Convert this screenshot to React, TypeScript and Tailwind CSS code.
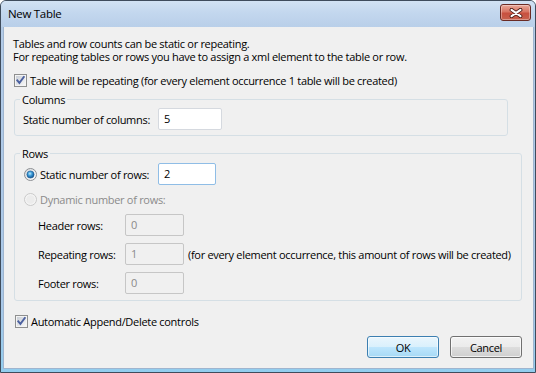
import React from "react";

function CheckBox() {
  return (
    <svg width="13" height="13" viewBox="0 0 13 13" className="shrink-0 block">
      <defs>
        <linearGradient id="cbIn" x1="0" y1="0" x2="1" y2="1">
          <stop offset="0" stopColor="#c9ced6" />
          <stop offset="1" stopColor="#f7f7f7" />
        </linearGradient>
      </defs>
      <rect x="0.5" y="0.5" width="12" height="12" fill="#f4f4f4" stroke="#8e8f8f" />
      <rect x="2" y="2" width="9" height="9" fill="url(#cbIn)" />
      <path d="M3.3 6.4 L5.4 8.9 L9.8 3" fill="none" stroke="#4c61a0" strokeWidth="1.9" strokeLinecap="square" />
    </svg>
  );
}

function RadioOn() {
  return (
    <svg width="13" height="13" viewBox="0 0 13 13" className="shrink-0 block">
      <defs>
        <linearGradient id="rbg" x1="0" y1="0" x2="1" y2="1">
          <stop offset="0" stopColor="#d6d8db" />
          <stop offset="1" stopColor="#ffffff" />
        </linearGradient>
        <radialGradient id="rdot" cx="0.42" cy="0.38" r="0.65">
          <stop offset="0" stopColor="#c2ecfd" />
          <stop offset="0.45" stopColor="#3a9ad8" />
          <stop offset="1" stopColor="#0d4a86" />
        </radialGradient>
      </defs>
      <circle cx="6.5" cy="6.5" r="6" fill="url(#rbg)" stroke="#8c8f93" />
      <circle cx="6.5" cy="6.5" r="3.6" fill="url(#rdot)" stroke="#1b5b93" strokeWidth="0.6" />
    </svg>
  );
}

function RadioOff() {
  return (
    <svg width="13" height="13" viewBox="0 0 13 13" className="shrink-0 block">
      <circle cx="6.5" cy="6.5" r="6" fill="#f4f4f4" stroke="#c9c9c9" />
      <circle cx="6.5" cy="6.5" r="4.3" fill="#ececec" />
    </svg>
  );
}

function Field({ value, w, variant }: { value: string; w: string; variant: "normal" | "focus" | "disabled" }) {
  const cls =
    variant === "normal"
      ? "bg-white border-[#d5d9df] text-black"
      : variant === "focus"
      ? "bg-white border-[#8fbde6] text-black"
      : "bg-[#f0f0f0] border-[#c6c6c6] text-[#8a8a8a]";
  return (
    <div className={`${w} h-[22px] shrink-0 border rounded-[2px] pl-[5px] pb-[2px] flex items-center leading-[15px] ${cls}`}>
      {value}
    </div>
  );
}

export default function App() {
  return (
    <div className="w-[536px] h-[373px] font-['Open_Sans','Noto_Sans',sans-serif] text-[11px] tracking-[-0.3px] leading-[15px] text-black">
      <div className="w-full h-full flex flex-col border border-[#3f4c5c] rounded-t-[6px] bg-[#b3cbe7] overflow-hidden">
        {/* Title bar */}
        <div className="h-[26px] shrink-0 flex items-center justify-between pl-[7px] pr-[4px] bg-[linear-gradient(to_bottom,#d2e2f3_0%,#c3d7ee_45%,#b9cfe9_100%)]">
          <span className="pb-[1px] text-[11.5px]">New Table</span>
          <div className="w-[31px] h-[17px] mb-[3px] rounded-[3px] border border-[#6a2b24] flex items-center justify-center bg-[linear-gradient(to_bottom,#e9a899_0%,#d77462_45%,#c8503f_55%,#c7614e_100%)] shadow-[inset_0_0_0_1px_rgba(255,255,255,0.35)]">
            <svg width="14" height="10" viewBox="0 0 14 10">
              <path d="M2.5 1.8 L11.5 8.2 M11.5 1.8 L2.5 8.2" stroke="#4a1a15" strokeWidth="3.8" strokeLinecap="round" />
              <path d="M2.5 1.8 L11.5 8.2 M11.5 1.8 L2.5 8.2" stroke="#ffffff" strokeWidth="2.1" strokeLinecap="round" />
            </svg>
          </div>
        </div>

        {/* Frame + client */}
        <div className="flex-1 flex pl-[2px] pr-[3px] pb-[3px] bg-[linear-gradient(to_bottom,#b3cbe7_0%,#a9c8e8_80%,#92cdee_100%)]">
          <div className="flex-1 bg-[#f0f0f0] border border-[#9fb5cf] border-t-0 flex flex-col pl-[9px] pr-[11px] pt-[10px]">
            <div className="leading-[13px]">
              <div>Tables and row counts can be static or repeating.</div>
              <div>For repeating tables or rows you have to assign a xml element to the table or row.</div>
            </div>

            <div className="mt-[10px] h-[15px] flex items-center gap-[3px] pl-[1px]">
              <CheckBox />
              <span>Table will be repeating (for every element occurrence 1 table will be created)</span>
            </div>

            {/* Columns */}
            <fieldset className="mt-[4px] ml-[1px] w-[494px] border border-[#d5dfe5] rounded-[3px]">
              <legend className="ml-[5px] px-[2px] leading-[15px]">Columns</legend>
              <div className="pt-[1px] pb-[5px] pl-[8px] flex items-center">
                <span className="w-[135px] shrink-0 whitespace-nowrap">Static number of columns:</span>
                <Field value="5" w="w-[64px]" variant="normal" />
              </div>
            </fieldset>

            {/* Rows */}
            <fieldset className="mt-[10px] ml-[1px] w-[508px] border border-[#d5dfe5] rounded-[3px]">
              <legend className="ml-[5px] px-[2px] leading-[15px]">Rows</legend>
              <div className="pt-[2px] pb-[6px] flex flex-col">
                <div className="flex items-center pl-[9px]">
                  <RadioOn />
                  <span className="ml-[3px] w-[118px] shrink-0 whitespace-nowrap">Static number of rows:</span>
                  <Field value="2" w="w-[58px]" variant="focus" />
                </div>
                <div className="mt-[7px] h-[15px] flex items-center pl-[9px]">
                  <RadioOff />
                  <span className="ml-[3px] text-[#8b8b8b]">Dynamic number of rows:</span>
                </div>
                <div className="mt-[7px] flex items-center pl-[23px]">
                  <span className="w-[87px] shrink-0">Header rows:</span>
                  <Field value="0" w="w-[59px]" variant="disabled" />
                </div>
                <div className="mt-[7px] flex items-center pl-[23px]">
                  <span className="w-[87px] shrink-0">Repeating rows:</span>
                  <Field value="1" w="w-[59px]" variant="disabled" />
                  <span className="ml-[4px] whitespace-nowrap">(for every element occurrence, this amount of rows will be created)</span>
                </div>
                <div className="mt-[7px] flex items-center pl-[23px]">
                  <span className="w-[87px] shrink-0">Footer rows:</span>
                  <Field value="0" w="w-[59px]" variant="disabled" />
                </div>
              </div>
            </fieldset>

            <div className="mt-[13px] h-[15px] flex items-center gap-[3px] pl-[2px]">
              <CheckBox />
              <span>Automatic Append/Delete controls</span>
            </div>

            <div className="mt-[7px] flex justify-end gap-[11px]">
              <div className="w-[72px] h-[22px] rounded-[3px] border border-[#3c7fb1] flex items-center justify-center bg-[linear-gradient(to_bottom,#eaf6fd_0%,#d9f0fc_50%,#bee6fd_50%,#a7d9f5_100%)] shadow-[inset_0_0_0_1px_rgba(255,255,255,0.6)]">
                OK
              </div>
              <div className="w-[72px] h-[22px] rounded-[3px] border border-[#707070] flex items-center justify-center bg-[linear-gradient(to_bottom,#f2f2f2_0%,#ebebeb_50%,#dddddd_50%,#cfcfcf_100%)] shadow-[inset_0_0_0_1px_rgba(255,255,255,0.7)]">
                Cancel
              </div>
            </div>
          </div>
        </div>
      </div>
    </div>
  );
}
